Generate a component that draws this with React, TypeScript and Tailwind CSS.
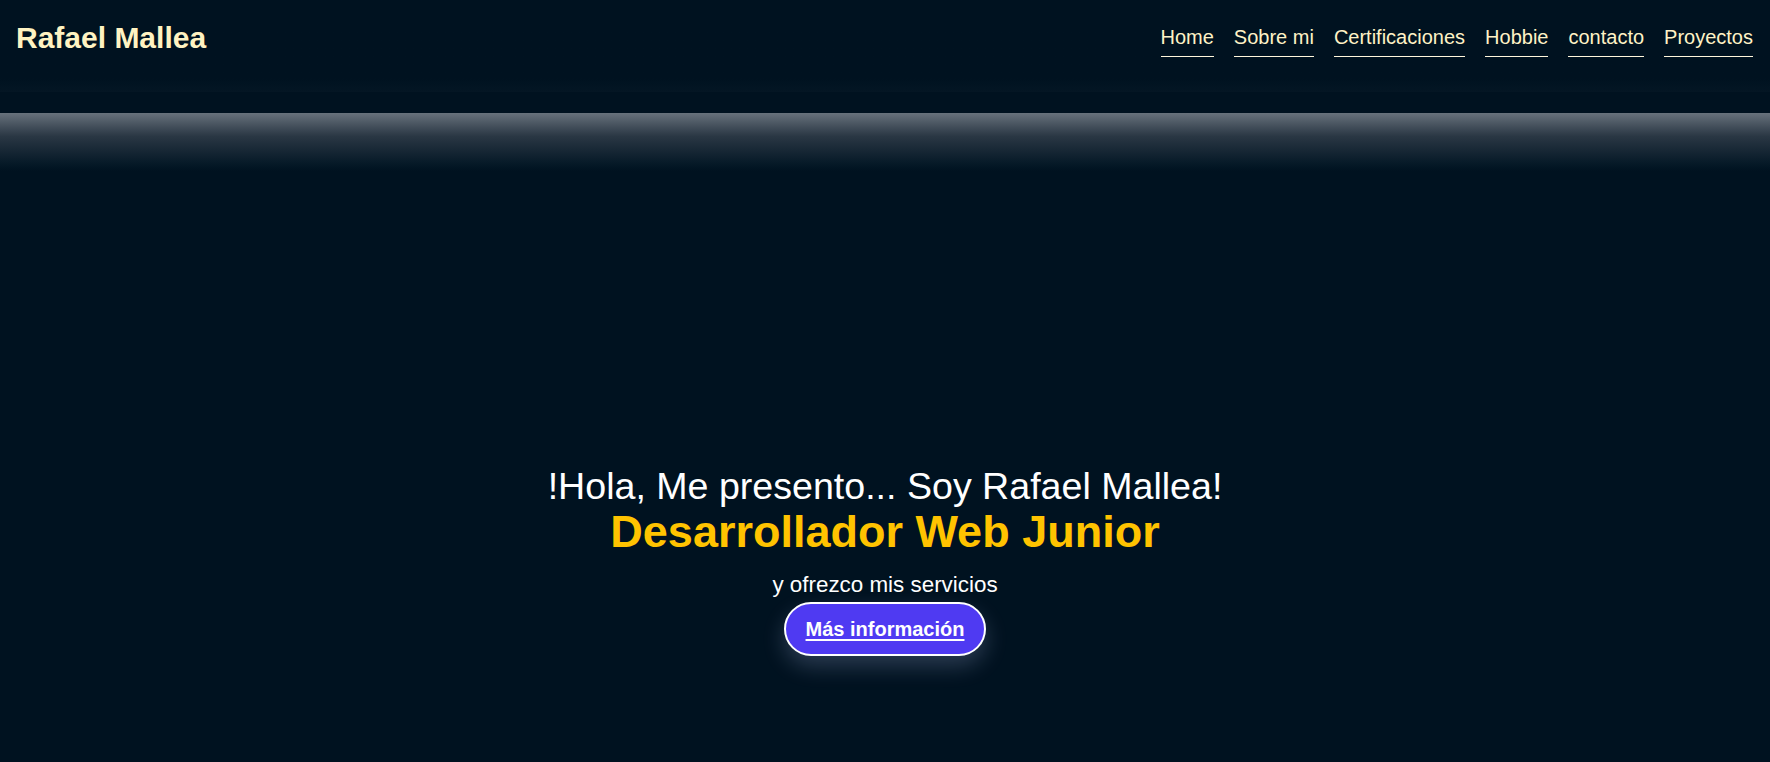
import React from "react";

const links = ["Home", "Sobre mi", "Certificaciones", "Hobbie", "contacto", "Proyectos"];

export default function App() {
  return (
    <div className="min-h-screen bg-[#001220] font-['Liberation_Sans',Arial,sans-serif] overflow-hidden">
      <header className="h-[92px] flex items-start justify-between pl-4 pr-[17px] pt-[21px] bg-gradient-to-b from-[#001220] from-85% to-[#041624]">
        <h1 className="text-[30px] leading-[33px] font-bold text-[#fff3c2]">Rafael Mallea</h1>
        <nav className="flex gap-5 mt-[5px]">
          {links.map((l) => (
            <a key={l} href="#" className="text-[20px] leading-[22px] text-[#fff2c6] pb-[8px] border-b-[1.5px] border-[#fff6dc]">
              {l}
            </a>
          ))}
        </nav>
      </header>
      <div className="h-[21px]" />
      <div className="h-[58px] bg-gradient-to-b from-[#68727c] via-[#2a3744] via-40% to-[#001220]" />
      <main className="flex flex-col items-center pt-[295px] pb-10 text-center">
        <p className="text-[37.6px] leading-[41px] text-white">!Hola, Me presento... Soy Rafael Mallea!</p>
        <h2 className="text-[45px] leading-[50px] font-bold text-[#ffc300]">Desarrollador Web Junior</h2>
        <p className="mt-[15px] text-[22.4px] leading-[26px] text-white">y ofrezco mis servicios</p>
        <a
          href="#"
          className="mt-[4px] h-[54px] flex items-center px-[20px] rounded-full border-2 border-white bg-[#4f3af2] text-white text-[20px] font-bold underline underline-offset-[3px] shadow-[0_10px_22px_rgba(190,205,255,0.22)]"
        >
          Más información
        </a>
      </main>
    </div>
  );
}
